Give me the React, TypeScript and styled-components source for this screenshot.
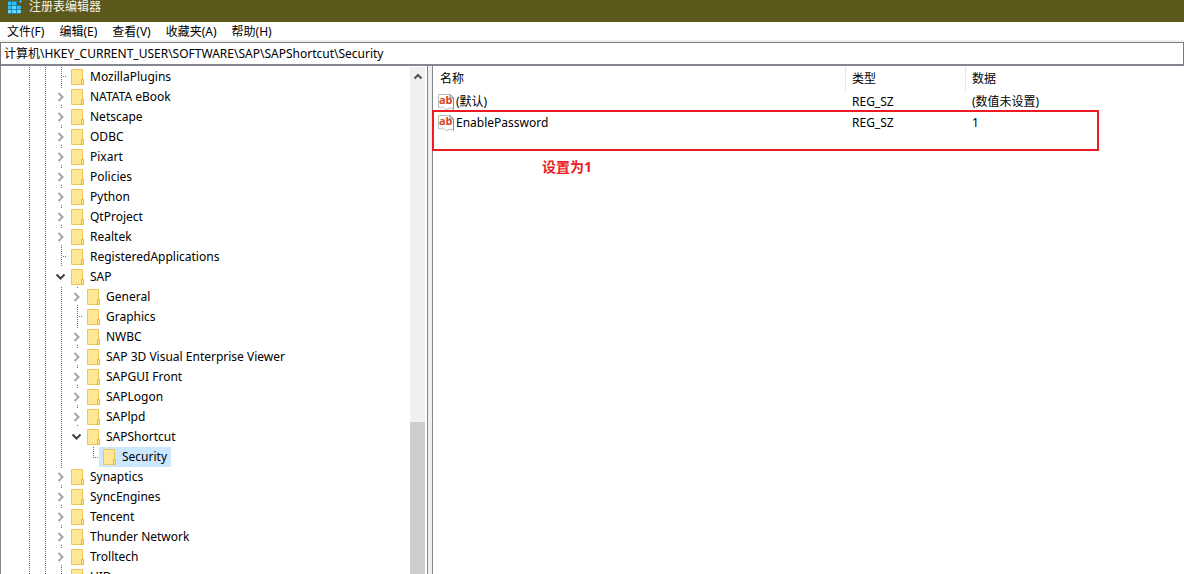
import React from "react";
import styled, { createGlobalStyle } from "styled-components";

const Global = createGlobalStyle`
  * { box-sizing: border-box; }
  html, body, #root { height: 100%; margin: 0; }
  body { overflow: hidden; background: #fff; color: #000; font: 12px/20px "Noto Sans", "Noto Sans CJK SC", sans-serif; }
  button, input { font: inherit; color: inherit; }
`;

const Window = styled.div`
  display: flex;
  flex-direction: column;
  height: 100vh;
`;

const TitleBar = styled.header`
  display: flex;
  flex: none;
  gap: 6px;
  height: 22px;
  padding-left: 7px;
  background: #5c581b;
  color: #f4f4ee;
`;

const TitleText = styled.h1`
  margin: 0;
  font-size: 12px;
  font-weight: 400;
  line-height: 14px;
`;

const MenuBar = styled.nav`
  display: flex;
  flex: none;
  gap: 15px;
  height: 20px;
  padding-left: 7px;
  border-bottom: 2px solid #f0f0f0;
`;

const MenuButton = styled.button`
  padding: 1px 0 0;
  border: 0;
  background: none;
  line-height: 18px;
`;

const AddressBar = styled.input`
  flex: none;
  width: 100%;
  height: 24px;
  padding: 0 3px 1px;
  border: 1px solid #7a7a7a;
  border-bottom: 2px solid #828790;
  background: #fff;
  outline: none;
`;

const Panes = styled.main`
  display: flex;
  flex: 1;
  min-height: 0;
`;

const TreePane = styled.section`
  display: flex;
  flex: none;
  width: 428px;
  border: solid #828790;
  border-width: 0 1px;
  overflow: hidden;
`;

const Tree = styled.ul`
  flex: 1;
  margin: 0;
  padding: 1px 0 0 20px;
  list-style: none;
`;

const TreeRow = styled.li`
  display: flex;
  height: 20px;
`;

const Guide = styled.svg<{ $branch?: boolean }>`
  flex: none;
  width: ${(p) => (p.$branch ? 14 : 16)}px;
  height: 20px;
`;

const KeyButton = styled.button<{ $selected?: boolean }>`
  display: flex;
  align-items: center;
  gap: 5px;
  height: 20px;
  padding: 0 4px;
  border: 0;
  background: ${(p) => (p.$selected ? "#cce8ff" : "none")};
  white-space: nowrap;
`;

const ScrollBar = styled.div`
  display: flex;
  flex-direction: column;
  flex: none;
  width: 17px;
  border: solid #fff;
  border-width: 1px 2px 0 0;
  background: #f0f0f0;
`;

const ScrollUp = styled.button`
  display: flex;
  flex: none;
  align-items: center;
  justify-content: center;
  height: 17px;
  padding: 0;
  border: 0;
  background: none;
`;

const ScrollTrack = styled.div`
  flex: 69;
`;

const ScrollThumb = styled.div`
  flex: 31;
  background: #cdcdcd;
`;

const Splitter = styled.div`
  flex: none;
  width: 5px;
  border-right: 1px solid #828790;
  background: #f0f0f0;
`;

const ValuesPane = styled.section`
  flex: 1;
  min-width: 0;
`;

const ValueTable = styled.table`
  width: 100%;
  table-layout: fixed;
  border-collapse: separate;
  border-spacing: 0;
  text-align: left;
`;

const HeadCell = styled.th<{ $width?: number }>`
  width: ${(p) => (p.$width ? p.$width + "px" : "auto")};
  height: 25px;
  padding: 0 6px;
  border-right: ${(p) => (p.$width ? "1px solid #e5e5e5" : "0")};
  font-weight: 400;

  &:first-child { padding-left: 7px; }
`;

const Cell = styled.td`
  height: 21px;
  padding: 0 6px;

  &:first-child { padding-left: 5px; }
`;

const ValueName = styled.span`
  display: flex;
  align-items: center;
  gap: 2px;
`;

const Highlight = styled.div`
  position: absolute;
  top: 110px;
  left: 432px;
  width: 667px;
  height: 41px;
  border: 2px solid #ed1c24;
  pointer-events: none;
`;

const Note = styled.p`
  position: absolute;
  top: 157px;
  left: 542px;
  margin: 0;
  color: #ed1c24;
  font-size: 14px;
  font-weight: 700;
`;

type Twist = "closed" | "open" | "leaf" | "end";
type KeyItem = { name: string; depth: number; twist: Twist; selected?: boolean };

const key = (name: string, depth = 0, twist: Twist = "closed", selected = false): KeyItem => ({ name, depth, twist, selected });

const keys: KeyItem[] = [
  key("MozillaPlugins", 0, "leaf"),
  key("NATATA eBook"),
  key("Netscape"),
  key("ODBC"),
  key("Pixart"),
  key("Policies"),
  key("Python"),
  key("QtProject"),
  key("Realtek"),
  key("RegisteredApplications", 0, "leaf"),
  key("SAP", 0, "open"),
  key("General", 1),
  key("Graphics", 1, "leaf"),
  key("NWBC", 1),
  key("SAP 3D Visual Enterprise Viewer", 1),
  key("SAPGUI Front", 1),
  key("SAPLogon", 1),
  key("SAPlpd", 1),
  key("SAPShortcut", 1, "open"),
  key("Security", 2, "end", true),
  key("Synaptics"),
  key("SyncEngines"),
  key("Tencent"),
  key("Thunder Network"),
  key("Trolltech"),
  key("UID", 0, "leaf"),
];

const values = [
  { name: "(默认)", type: "REG_SZ", data: "(数值未设置)" },
  { name: "EnablePassword", type: "REG_SZ", data: "1" },
];

const dots = { stroke: "#707070", strokeDasharray: "1 1", fill: "none" };

const Line = () => (
  <Guide viewBox="0 0 16 20" aria-hidden="true">
    <path d="M8.5 0v20" {...dots} />
  </Guide>
);

const Branch = ({ twist }: { twist: Twist }) => (
  <Guide $branch viewBox="0 0 14 20" aria-hidden="true">
    {twist === "leaf" && <path d="M8.5 0v20M10 9.5h5" {...dots} />}
    {twist === "end" && <path d="M8.5 0v11M10 10.5h5" {...dots} />}
    {twist === "closed" && (
      <>
        <path d="M8.5 0v2M8.5 18v2" {...dots} />
        <path d="M5.5 6l4 4l-4 4" stroke="#a6a6a6" strokeWidth="2" fill="none" />
      </>
    )}
    {twist === "open" && (
      <path d="M3.500 7.500l4 4l4-4" stroke="#404040" strokeWidth="2" fill="none" />
    )}
  </Guide>
);

const Folder = () => (
  <svg width="14" height="16" viewBox="0 0 14 16" aria-hidden="true">
    <path d="M.5.5h11v10h1v5H.5z" fill="#ffe796" stroke="#ecc757" />
    <path d="M10.500 15v-4.500h2v5h-2z" fill="#ffe387" stroke="#e5bd43" />
  </svg>
);

const StringIcon = () => (
  <svg width="16" height="16" viewBox="0 0 16 16" aria-hidden="true">
    <path d="M.5.5H12l3.500 3.500v11.500l-2.500-1.500-2 .5-2 1-2.500-1-2-1.500-1.500 1-2.500-.5z" fill="#fff" stroke="#bdbdbd" />
    <path d="M12 .5l3.500 3.500v11.500M12 .5V4h3.500" fill="none" stroke="#8c8c8c" />
    <text x="1" y="10" fontSize="11" fontWeight="700" fill="#d64a26">ab</text>
  </svg>
);

const AppIcon = () => (
  <svg width="16" height="15" viewBox="0 0 16 15" aria-hidden="true">
    <path d="M1 1h12v13H1z" fill="#1c87b8" />
    <path d="M1 2h3v3H1zM5 2h4v3H5zM1 6h3v3H1zM10 6h4v3h-4z" fill="#35bdf2" />
    <path d="M5 6h4v3H5zM1 10h3v3H1zM5 10h4v3H5zM10 10h4v3h-4z" fill="#6ad6fb" />
    <path d="M10 0h6v5h-6z" fill="#5c581b" />
    <path d="M13.500 0v3M12 1.500h3" stroke="#35bdf2" />
  </svg>
);

export default function App() {
  return (
    <Window>
      <Global />
      <TitleBar>
        <AppIcon />
        <TitleText>注册表编辑器</TitleText>
      </TitleBar>
      <MenuBar>
        {["文件(F)", "编辑(E)", "查看(V)", "收藏夹(A)", "帮助(H)"].map((label) => (
          <MenuButton key={label}>{label}</MenuButton>
        ))}
      </MenuBar>
      <AddressBar aria-label="地址" defaultValue={"计算机\\HKEY_CURRENT_USER\\SOFTWARE\\SAP\\SAPShortcut\\Security"} />
      <Panes>
        <TreePane>
          <Tree>
            {keys.map((item) => (
              <TreeRow key={item.name}>
                <Line />
                <Line />
                {item.depth > 0 && <Line />}
                {item.depth > 1 && <Guide />}
                <Branch twist={item.twist} />
                <KeyButton $selected={item.selected}>
                  <Folder />
                  {item.name}
                </KeyButton>
              </TreeRow>
            ))}
          </Tree>
          <ScrollBar>
            <ScrollUp aria-label="向上滚动">
              <svg width="10" height="8" viewBox="0 0 10 8" aria-hidden="true">
                <path d="M1.500 6.500L5 3L8.500 6.500" fill="none" stroke="#505050" strokeWidth="2" />
              </svg>
            </ScrollUp>
            <ScrollTrack />
            <ScrollThumb />
          </ScrollBar>
        </TreePane>
        <Splitter />
        <ValuesPane>
          <ValueTable>
            <thead>
              <tr>
                <HeadCell $width={413}>名称</HeadCell>
                <HeadCell $width={120}>类型</HeadCell>
                <HeadCell>数据</HeadCell>
              </tr>
            </thead>
            <tbody>
              {values.map((v) => (
                <tr key={v.name}>
                  <Cell>
                    <ValueName>
                      <StringIcon />
                      {v.name}
                    </ValueName>
                  </Cell>
                  <Cell>{v.type}</Cell>
                  <Cell>{v.data}</Cell>
                </tr>
              ))}
            </tbody>
          </ValueTable>
        </ValuesPane>
      </Panes>
      <Highlight />
      <Note>设置为1</Note>
    </Window>
  );
}
